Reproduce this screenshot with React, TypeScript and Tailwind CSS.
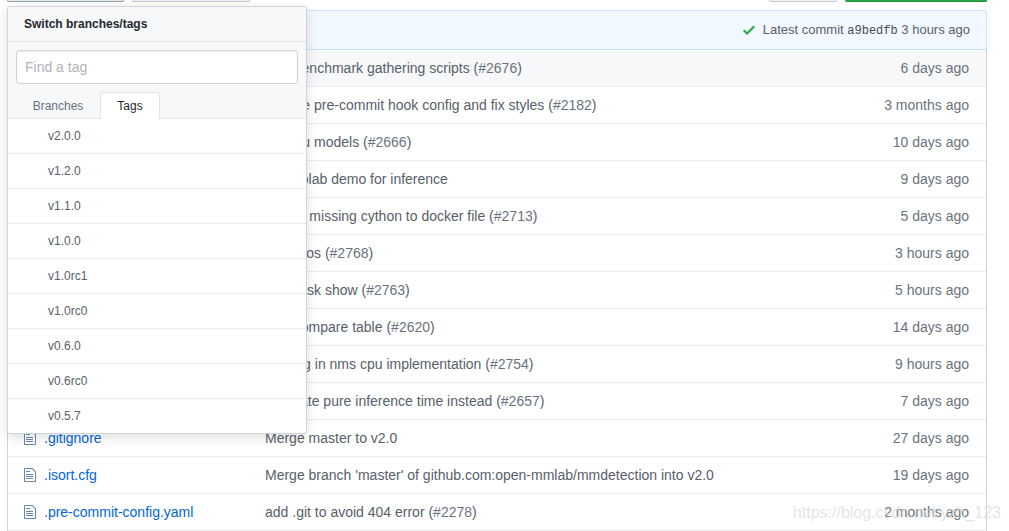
import React from 'react';

type Entry = {
  kind: 'dir' | 'file';
  name: string;
  message: string;
  issue?: string;
  age: string;
};

const entries: Entry[] = [
  { kind: 'dir', name: '.dev_scripts', message: 'Add benchmark gathering scripts', issue: '#2676', age: '6 days ago' },
  { kind: 'dir', name: '.github', message: 'Update pre-commit hook config and fix styles', issue: '#2182', age: '3 months ago' },
  { kind: 'dir', name: 'configs', message: 'Fix cpu models', issue: '#2666', age: '10 days ago' },
  { kind: 'dir', name: 'demo', message: 'Add colab demo for inference', age: '9 days ago' },
  { kind: 'dir', name: 'docker', message: 'Added missing cython to docker file', issue: '#2713', age: '5 days ago' },
  { kind: 'dir', name: 'docs', message: 'Fix typos', issue: '#2768', age: '3 hours ago' },
  { kind: 'dir', name: 'mmdet', message: 'Fix mask show', issue: '#2763', age: '5 hours ago' },
  { kind: 'dir', name: 'requirements', message: 'Add compare table', issue: '#2620', age: '14 days ago' },
  { kind: 'dir', name: 'tests', message: 'Fix bug in nms cpu implementation', issue: '#2754', age: '9 hours ago' },
  { kind: 'dir', name: 'tools', message: 'Evaluate pure inference time instead', issue: '#2657', age: '7 days ago' },
  { kind: 'file', name: '.gitignore', message: 'Merge master to v2.0', age: '27 days ago' },
  { kind: 'file', name: '.isort.cfg', message: "Merge branch 'master' of github.com:open-mmlab/mmdetection into v2.0", age: '19 days ago' },
  { kind: 'file', name: '.pre-commit-config.yaml', message: 'add .git to avoid 404 error', issue: '#2278', age: '2 months ago' },
];

const tags = ['v2.0.0', 'v1.2.0', 'v1.1.0', 'v1.0.0', 'v1.0rc1', 'v1.0rc0', 'v0.6.0', 'v0.6rc0', 'v0.5.7'];

function FileIcon() {
  return (
    <svg viewBox="0 0 12 16" className="h-4 w-3 shrink-0 fill-[#6a86a8]" aria-hidden="true">
      <path d="M6 5H2V4h4v1zM2 8h7V7H2v1zm0 2h7V9H2v1zm0 2h7v-1H2v1zm10-7.5V14c0 .55-.45 1-1 1H1c-.55 0-1-.45-1-1V2c0-.55.45-1 1-1h7.5L12 4.5zM11 5L8 2H1v12h10V5z" />
    </svg>
  );
}

function FolderIcon() {
  return (
    <svg viewBox="0 0 14 16" className="h-4 w-3 shrink-0 fill-[#6a86a8]" aria-hidden="true">
      <path d="M13 4H7V3c0-.66-.31-1-1-1H1c-.55 0-1 .45-1 1v10c0 .55.45 1 1 1h12c.55 0 1-.45 1-1V5c0-.55-.45-1-1-1zM6 4H1V3h5v1z" />
    </svg>
  );
}

function CheckIcon() {
  return (
    <svg viewBox="0 0 12 16" className="h-4 w-3 fill-[#28a745]" aria-hidden="true">
      <path d="M12 5l-8 8-4-4 1.5-1.5L4 10l6.5-6.5L12 5z" />
    </svg>
  );
}

function Toolbar() {
  return (
    <div className="flex h-0.5 items-end gap-2">
      <button type="button" aria-label="Switch branch" className="h-0.5 w-[117px] rounded-b-[3px] border border-t-0 border-[#959da5] bg-[#e9ecef]" />
      <button type="button" aria-label="New pull request" className="h-0.5 w-[118px] rounded-b-[3px] border border-t-0 border-[#c5c9cd] bg-[#eff3f6]" />
      <button type="button" aria-label="Find file" className="ml-auto h-0.5 w-[68px] rounded-b-[3px] border border-t-0 border-[#c5c9cd] bg-[#eff3f6]" />
      <button type="button" aria-label="Clone or download" className="h-0.5 w-[142px] rounded-b-[3px] border border-t-0 border-[#23923d] bg-[#28a745]" />
    </div>
  );
}

function TagMenu() {
  return (
    <div className="absolute top-1.5 left-[7px] z-10 w-[300px] overflow-hidden rounded-[3px] border border-[#d1d5da] bg-white text-xs text-[#586069] shadow-[0_3px_12px_rgba(27,31,35,0.15)]">
      <div className="bg-[#f6f8fa]">
        <h2 className="border-b border-[#e1e4e8] px-4 py-[9px] text-xs leading-4 font-bold text-[#24292e]">
          Switch branches/tags
        </h2>
        <div className="p-2">
          <input
            type="text"
            aria-label="Find a tag"
            placeholder="Find a tag"
            className="block h-[34px] w-full rounded-[3px] border border-[#d1d5da] bg-white px-2 text-sm text-[#24292e] shadow-[inset_0_1px_2px_rgba(27,31,35,0.075)] placeholder:text-[#b0b3b6]"
          />
        </div>
        <div role="tablist" className="flex h-[27px] border-b border-[#e1e4e8] px-2">
          <button type="button" role="tab" aria-selected="false" className="h-[27px] w-[84px] text-[#6a737d]">
            Branches
          </button>
          <button type="button" role="tab" aria-selected="true" className="h-[27px] w-[60px] rounded-t-[3px] border border-b-0 border-[#e1e4e8] bg-white text-[#24292e]">
            Tags
          </button>
        </div>
      </div>
      <ul>
        {tags.map((tag) => (
          <li key={tag} className="border-b border-[#eaecef] last:border-b-0">
            <a href="#" className="block py-[9px] pr-2 pl-10 leading-4">
              {tag}
            </a>
          </li>
        ))}
      </ul>
    </div>
  );
}

export default function App() {
  return (
    <div className="relative overflow-hidden bg-white pr-[22px] pl-[7px] font-['Liberation_Sans',Arial,sans-serif] text-sm text-[#24292e]">
      <Toolbar />
      <TagMenu />
      <main className="mt-2">
        <div className="flex items-center justify-end rounded-t-[3px] border border-[#c8e1ff] bg-[#f1f8ff] px-4 py-[9px] text-[13px] leading-5 text-[#586069]">
          <CheckIcon />
          <span className="ml-2">
            Latest commit{' '}
            <a href="#" className="font-['Liberation_Mono',monospace] text-xs text-[#444d56]">
              a9bedfb
            </a>{' '}
            3 hours ago
          </span>
        </div>
        <div className="border-x border-[#d1d5da]">
          <table className="w-full table-fixed border-collapse text-left leading-5">
            <tbody>
              {entries.map((entry) => (
                <tr key={entry.name} className="border-b border-[#eaecef] first:bg-[#f6f8fa]">
                  <td className="w-[257px] py-2 pl-4">
                    <div className="flex items-center gap-2">
                      {entry.kind === 'dir' ? <FolderIcon /> : <FileIcon />}
                      <a href="#" className="text-[#0366d6]">
                        {entry.name}
                      </a>
                    </div>
                  </td>
                  <td className="truncate py-2 text-[#586069]">
                    {entry.message}
                    {entry.issue && (
                      <>
                        {' ('}
                        <a href="#" className="text-[#6a737d]">
                          {entry.issue}
                        </a>
                        )
                      </>
                    )}
                  </td>
                  <td className="w-[140px] py-2 pr-[17px] text-right text-[#6a737d]">{entry.age}</td>
                </tr>
              ))}
            </tbody>
          </table>
        </div>
      </main>
      <p className="pointer-events-none absolute right-2 bottom-1.5 text-base leading-6 text-[#d8d8d8]/70">
        https://blog.csdn.net/yzh_123
      </p>
    </div>
  );
}
